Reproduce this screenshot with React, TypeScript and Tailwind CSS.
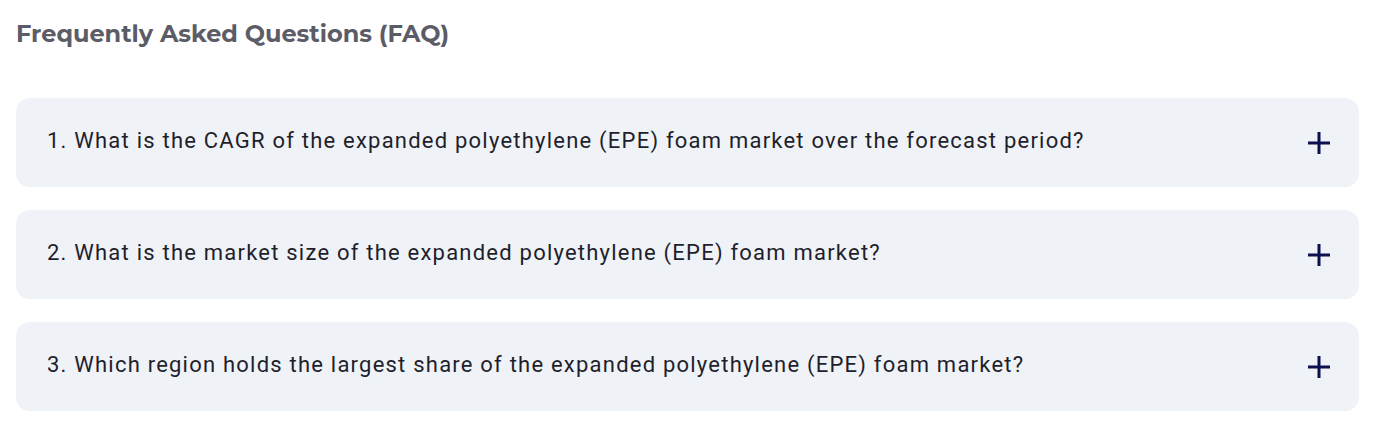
import React from 'react';

const questions = [
  '1. What is the CAGR of the expanded polyethylene (EPE) foam market over the forecast period?',
  '2. What is the market size of the expanded polyethylene (EPE) foam market?',
  '3. Which region holds the largest share of the expanded polyethylene (EPE) foam market?',
];

const PlusIcon = () => (
  <svg width="22" height="22" viewBox="0 0 22 22" fill="none">
    <path d="M11 0v22M0 11h22" stroke="#0b1150" strokeWidth="3" />
  </svg>
);

const App: React.FC = () => {
  return (
    <div className="w-[1378px] h-[433px] bg-white px-4 pt-[19px]">
      <h2 className="text-[24px] leading-[30px] font-bold text-[#5c5c66] font-['Montserrat','Open_Sans',sans-serif]">
        Frequently Asked Questions (FAQ)
      </h2>
      <div className="mt-[49px] flex flex-col gap-[23px] pr-[3px]">
        {questions.map((q, i) => (
          <div
            key={i}
            className="h-[89px] rounded-[14px] bg-[#eff2f7] flex items-center justify-between pl-[31px] pr-[29px]"
          >
            <span className="text-[22px] leading-[24px] pb-[4px] text-[#1f1f2b] font-['Roboto',sans-serif] tracking-[1.22px]">{q}</span>
            <PlusIcon />
          </div>
        ))}
      </div>
    </div>
  );
};

export default App;
